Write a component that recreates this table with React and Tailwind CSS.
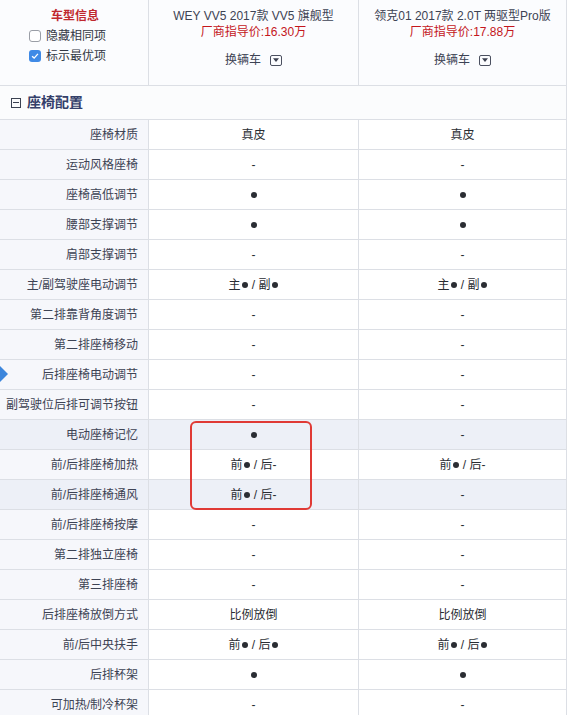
import { Fragment } from 'react'

const rows = [
  ['座椅材质', '真皮', '真皮'],
  ['运动风格座椅', '-', '-'],
  ['座椅高低调节', '●', '●'],
  ['腰部支撑调节', '●', '●'],
  ['肩部支撑调节', '-', '-'],
  ['主/副驾驶座电动调节', '主● / 副●', '主● / 副●'],
  ['第二排靠背角度调节', '-', '-'],
  ['第二排座椅移动', '-', '-'],
  ['后排座椅电动调节', '-', '-'],
  ['副驾驶位后排可调节按钮', '-', '-'],
  ['电动座椅记忆', '●', '-'],
  ['前/后排座椅加热', '前● / 后-', '前● / 后-'],
  ['前/后排座椅通风', '前● / 后-', '-'],
  ['前/后排座椅按摩', '-', '-'],
  ['第二排独立座椅', '-', '-'],
  ['第三排座椅', '-', '-'],
  ['后排座椅放倒方式', '比例放倒', '比例放倒'],
  ['前/后中央扶手', '前● / 后●', '前● / 后●'],
  ['后排杯架', '●', '●'],
  ['可加热/制冷杯架', '-', '-'],
]

const cars = [
  { name: 'WEY VV5 2017款 VV5 旗舰型', price: '厂商指导价:16.30万' },
  { name: '领克01 2017款 2.0T 两驱型Pro版', price: '厂商指导价:17.88万' },
]

function Value({ text }) {
  const parts = text.split('●')
  return (
    <span>
      {parts.map((p, i) => (
        <Fragment key={i}>
          {p}
          {i < parts.length - 1 && (
            <span className="mx-[1px] inline-block h-[6px] w-[6px] rounded-full bg-[#2a2d33] align-middle" />
          )}
        </Fragment>
      ))}
    </span>
  )
}

function Checkbox({ checked, label }) {
  return (
    <div className="flex items-center gap-[5px]">
      {checked ? (
        <span className="flex h-[12px] w-[12px] items-center justify-center rounded-[3px] bg-[#3f8ae6]">
          <svg viewBox="0 0 12 12" className="h-[10px] w-[10px]">
            <path d="M2.5 6.2 L5 8.5 L9.5 3.5" fill="none" stroke="#fff" strokeWidth="1.6" />
          </svg>
        </span>
      ) : (
        <span className="h-[12px] w-[12px] rounded-[3px] border border-[#9a9ea6] bg-white" />
      )}
      <span className="text-[12px] text-[#333844]">{label}</span>
    </div>
  )
}

function DropBox() {
  return (
    <span className="ml-[9px] inline-flex h-[11px] w-[12px] items-center justify-center rounded-[2px] border border-[#4b5060] align-middle">
      <svg viewBox="0 0 8 5" className="h-[4px] w-[6px]">
        <path d="M0 0 H8 L4 5 Z" fill="#3c4150" />
      </svg>
    </span>
  )
}

export default function App() {
  return (
    <div className="relative h-[715px] w-[568px] overflow-hidden bg-white font-[family-name:'Liberation_Sans','Noto_Sans_CJK_SC',sans-serif] text-[12px] text-[#2f3440]">
      <div className="w-[567px] border-r border-[#dcdfe5]">
        {/* header */}
        <div className="grid h-[86px] grid-cols-[149px_210px_1fr] border-b border-[#dcdfe5] bg-[#fbfcfe]">
          <div className="flex flex-col items-start border-r border-[#dcdfe5] pl-[29px] pt-[7px]">
            <div className="mb-[2px] w-[92px] text-center text-[12px] font-bold text-[#c0282e]">车型信息</div>
            <div className="flex flex-col gap-[2px]">
              <Checkbox label="隐藏相同项" />
              <Checkbox checked label="标示最优项" />
            </div>
          </div>
          {cars.map((c, i) => (
            <div key={i} className={`flex flex-col items-center pt-[8px] ${i === 0 ? 'border-r border-[#dcdfe5]' : ''}`}>
              <div className="leading-[16px] text-[#3d4354]">{c.name}</div>
              <div className="leading-[16px] text-[#c4161c]">{c.price}</div>
              <div className="mt-[12px] flex items-center leading-[16px] text-[#3d4354]">
                换辆车
                <DropBox />
              </div>
            </div>
          ))}
        </div>

        {/* section */}
        <div className="flex h-[34px] items-center border-b border-[#dcdfe5] bg-[#fbfcfd] pl-[11px]">
          <span className="flex h-[10px] w-[10px] items-center justify-center border border-[#3b4252]">
            <span className="h-[1px] w-[6px] bg-[#3b4252]" />
          </span>
          <span className="ml-[6px] text-[14px] font-semibold text-[#34406a]">座椅配置</span>
        </div>

        {/* rows */}
        {rows.map(([label, a, b], i) => {
          const diff = a !== b
          return (
            <div
              key={i}
              className={`grid h-[30px] grid-cols-[149px_210px_1fr] border-b border-[#dcdfe5] ${diff ? 'bg-[#edf0f7]' : 'bg-white'}`}
            >
              <div className={`flex items-center justify-end border-r border-[#dcdfe5] pr-[10px] text-[#3d4354] ${diff ? 'bg-[#edf0f7]' : 'bg-[#f6f7fb]'}`}>
                {label}
              </div>
              <div className="flex items-center justify-center border-r border-[#dcdfe5] text-[#2a2d33]">
                <Value text={a} />
              </div>
              <div className="flex items-center justify-center text-[#2a2d33]">
                <Value text={b} />
              </div>
            </div>
          )
        })}
      </div>

      {/* side tab marker */}
      <div className="absolute left-0 top-[366px] h-0 w-0 border-y-[8px] border-l-[8px] border-y-transparent border-l-[#3c86dc]" />

      {/* highlight box */}
      <div className="pointer-events-none absolute left-[190px] top-[421px] h-[89px] w-[122px] rounded-[6px] border-2 border-[#e03a35]" />
    </div>
  )
}
